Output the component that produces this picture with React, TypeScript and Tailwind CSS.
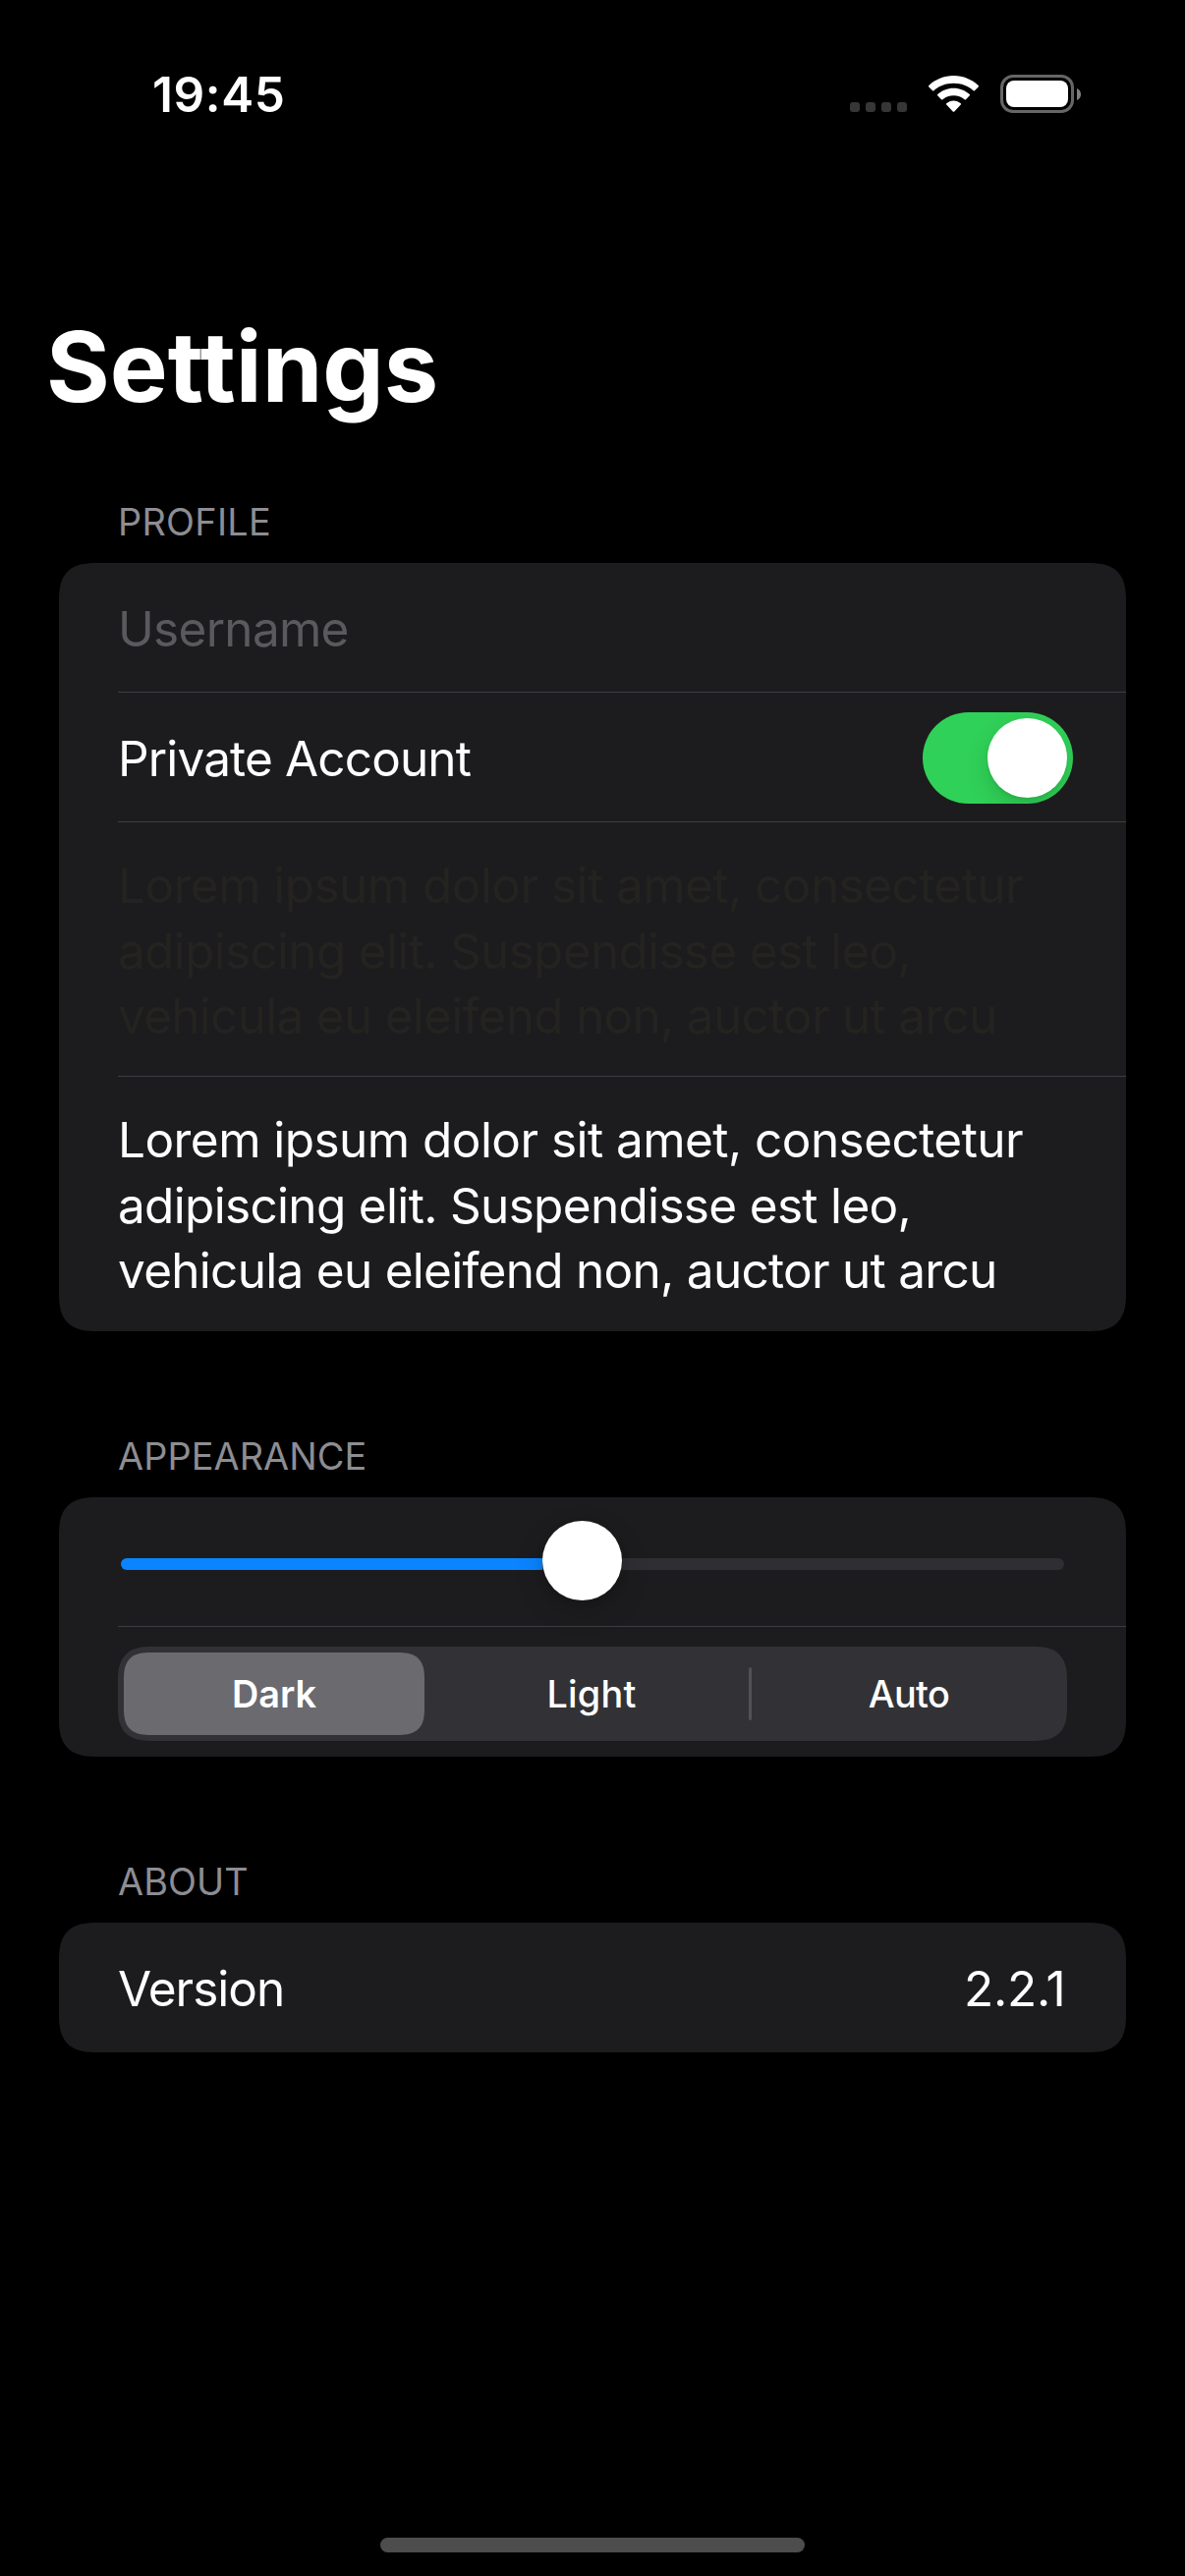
import type { ReactNode } from "react";

function StatusBar() {
  return (
    <header className="flex h-[126px] items-start pl-[155px] pr-[106px]">
      <time className="mt-[66px] text-[49.5px] font-semibold leading-[60px] tracking-[0.6px]">19:45</time>
      <div className="ml-auto mt-[76px] flex items-start">
        <div className="mt-[28px] flex gap-[6px]">
          <i className="size-[10px] rounded-[3px] bg-[#363636]" />
          <i className="size-[10px] rounded-[3px] bg-[#363636]" />
          <i className="size-[10px] rounded-[3px] bg-[#363636]" />
          <i className="size-[10px] rounded-[3px] bg-[#363636]" />
        </div>
        <svg className="ml-[22px] mt-px h-[37px] w-[51px]" viewBox="0 0 51 37" fill="white">
          <path d="M25.5 0C35.3 0 44.2 3.8 50.7 10.1C51.1 10.5 51.1 11 50.7 11.4L46.9 15.3C46.5 15.7 46 15.7 45.6 15.3C40.4 10.4 33.3 7.7 25.5 7.7C17.7 7.7 10.6 10.4 5.4 15.3C5 15.7 4.5 15.7 4.1 15.3L0.3 11.4C-0.1 11 -0.1 10.5 0.3 10.1C6.8 3.8 15.7 0 25.5 0Z" />
          <path d="M25.5 12.7C31.7 12.7 37.4 15.1 41.8 19C42.2 19.4 42.2 19.9 41.8 20.3L38 24.2C37.6 24.6 37.1 24.6 36.6 24.2C33.6 21.7 29.7 20.2 25.5 20.2C21.3 20.2 17.4 21.7 14.4 24.2C13.9 24.6 13.4 24.6 13 24.2L9.2 20.3C8.8 19.9 8.8 19.4 9.2 19C13.6 15.1 19.3 12.7 25.5 12.7Z" />
          <path d="M25.5 25.4C28.3 25.4 30.8 26.5 32.8 28.2C33.2 28.6 33.2 29.1 32.8 29.5L26.3 36.4C25.8 37 25.2 37 24.7 36.4L18.2 29.5C17.8 29.1 17.8 28.6 18.2 28.2C20.2 26.5 22.7 25.4 25.5 25.4Z" />
        </svg>
        <div className="ml-[22px] h-[39px] w-[75px] rounded-[13px] border-[3px] border-[#666] p-[3px]">
          <div className="h-[27px] w-[63px] rounded-[8px] bg-white" />
        </div>
        <svg className="ml-[3px] mt-[14px] h-[12px] w-[4px]" viewBox="0 0 4 12" fill="#808080">
          <path d="M0 0C2.5 1 4 3.300 4 6S2.500 11 0 12Z" />
        </svg>
      </div>
    </header>
  );
}

function Section({ title, className, children }: { title: ReactNode; className: string; children: ReactNode }) {
  return (
    <section className={className}>
      <h2 className="mb-[19px] pl-[60px] text-[37.8px] leading-[46px] text-[#8d8d93]">{title}</h2>
      <div className="overflow-hidden rounded-[40px] bg-[#1c1c1e] pl-[60px] [corner-shape:superellipse(1.48)]">
        {children}
      </div>
    </section>
  );
}

function Lorem() {
  return (
    <>
      <span className="block tracking-[-0.55px]">Lorem ipsum dolor sit amet, consectetur</span>
      <span className="block tracking-[-0.68px]">adipiscing elit. Suspendisse est leo,</span>
      <span className="block tracking-[-0.72px]">vehicula eu eleifend non, auctor ut arcu</span>
    </>
  );
}

export default function App() {
  return (
    <div className="flex h-[2622px] w-[1206px] flex-col overflow-hidden bg-black font-['Inter',sans-serif] text-[49.5px] text-white">
      <StatusBar />
      <h1 className="mt-[187px] pl-[47px] text-[99px] font-bold leading-[120px]">Settings</h1>

      <main className="px-[60px]">
        <Section title={<span className="tracking-[0.3px]">PROFILE</span>} className="mt-[75px]">
          <div className="flex h-[132px] items-center border-b border-[#3d3d41] pt-[3px] tracking-[-0.72px] text-[#5a5a5e]">
            Username
          </div>
          <div className="flex h-[132px] items-center justify-between border-b border-[#3d3d41] pr-[54px] pt-[2px]">
            <span className="pt-px tracking-[-0.86px]">Private Account</span>
            <div className="flex h-[93px] w-[153px] justify-end overflow-hidden rounded-full bg-[#30d158] p-[6px]">
              <div className="size-[81px] rounded-full bg-white shadow-[0_9px_24px_rgba(0,0,0,0.15),0_3px_3px_rgba(0,0,0,0.06)]" />
            </div>
          </div>
          <p className="h-[259px] border-b border-[#3d3d41] pt-[31px] leading-[66.5px] text-[#242320]">
            <Lorem />
          </p>
          <p className="h-[259px] pt-[31px] leading-[66.5px]">
            <Lorem />
          </p>
        </Section>

        <Section title={<span className="tracking-[0.1px]">APPEARANCE</span>} className="mt-[104px]">
          <div className="flex h-[132px] border-b border-[#3d3d41] pl-[3px]">
            <div className="mt-[62px] h-[12px] w-[429px] rounded-l-[6px] bg-[#0a84ff]" />
            <div className="relative z-10 -mr-[40px] mt-[24px] size-[81px] rounded-full bg-white shadow-[0_10px_30px_rgba(0,0,0,0.16),0_2px_8px_rgba(0,0,0,0.12)]" />
            <div className="mt-[62px] h-[12px] w-[490px] rounded-r-[6px] bg-[#2f2f33]" />
          </div>
          <div className="flex h-[132px] items-start pt-[20px] text-[37.8px]">
            <div className="relative grid h-[96px] w-[966px] grid-cols-3 rounded-[36px] bg-[#323236] font-[450] [corner-shape:superellipse(1.48)]">
              <div className="py-[6px] pl-[6px] pr-[10px]">
                <div className="flex h-full items-center justify-center rounded-[28px] bg-[#6a6a6f] font-[570] [corner-shape:superellipse(1.48)]">
                  Dark
                </div>
              </div>
              <div className="flex items-center justify-center pr-[2px] tracking-[0.2px]">Light</div>
              <div className="flex items-center justify-center tracking-[-0.6px]">Auto</div>
              <i className="absolute left-[642px] top-[21px] h-[54px] w-[3px] rounded-full bg-[#515156]" />
            </div>
          </div>
        </Section>

        <Section title={<span className="tracking-[0.1px]">ABOUT</span>} className="mt-[104px]">
          <div className="flex h-[132px] items-center justify-between pr-[60px] pt-[2px]">
            <span className="tracking-[-1px]">Version</span>
            <span className="w-[105px] tracking-[-0.25px]">2.2.1</span>
          </div>
        </Section>
      </main>

      <div className="mx-auto mb-[24px] mt-auto h-[15px] w-[432px] rounded-full bg-[#4d4d4d]" />
    </div>
  );
}
